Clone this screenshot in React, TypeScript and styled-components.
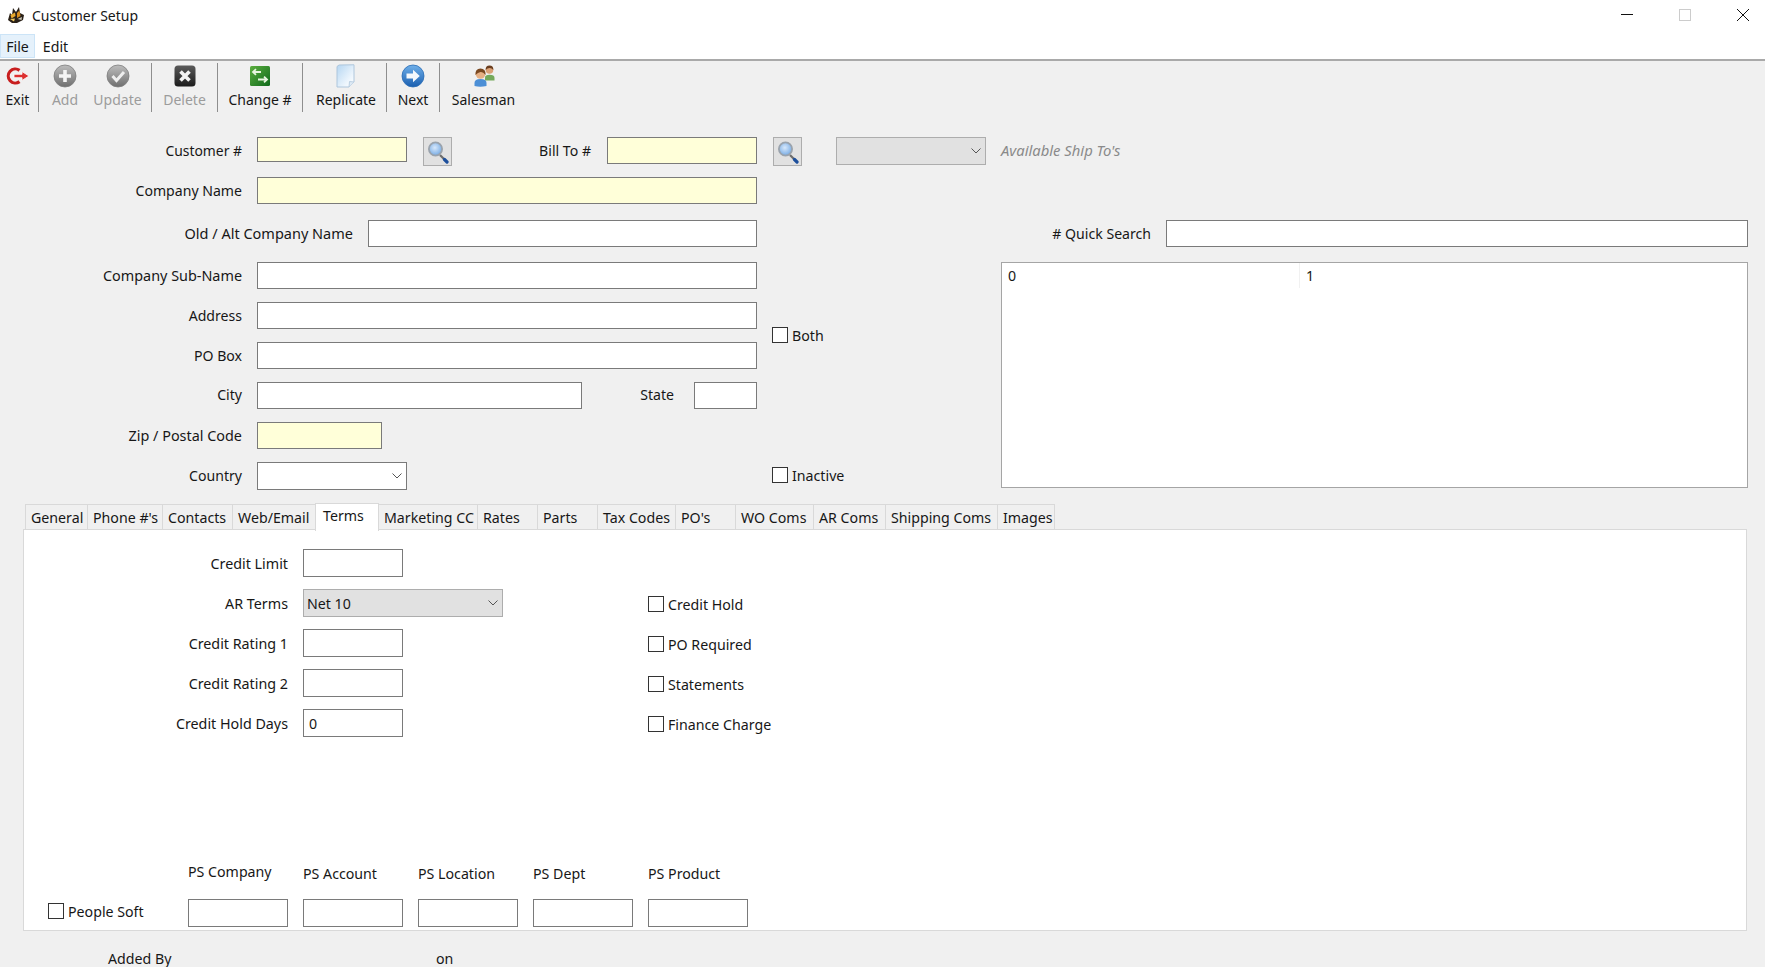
import React from "react";
import styled, { createGlobalStyle } from "styled-components";

const Global = createGlobalStyle`
  html, body { margin: 0; padding: 0; background: #f0f0f0; overflow: hidden; }
  * { box-sizing: border-box; }
  body { font-family: "Noto Sans", "Open Sans", "Liberation Sans", sans-serif; font-size: 14.2px; color: #171717; }
`;

const Page = styled.div`width: 1765px; height: 967px; overflow: hidden; background: #f0f0f0; display: flex; flex-direction: column;`;
const TitleBar = styled.div`height: 34px; background: #fff; display: flex; align-items: center; padding: 0 16px 4px 7px; flex: none;`;
const TitleText = styled.span`margin-left: 7px; flex: 1; font-size: 14px;`;
const WinControls = styled.div`display: flex; gap: 46px; align-items: center;`;
const MenuBar = styled.div`height: 27px; background: #fff; border-bottom: 2px solid #a9a9a9; display: flex; flex: none;`;
const MenuItem = styled.div<{ $on?: boolean; $w: number }>`
  width: ${p => p.$w}px; height: 24px; display: flex; align-items: center; justify-content: center;
  background: ${p => (p.$on ? "#e5f1fb" : "transparent")};
  border: 1px solid ${p => (p.$on ? "#cce4f7" : "transparent")};
`;
const Toolbar = styled.div`height: 54px; display: flex; align-items: flex-start; padding-top: 2px; flex: none;`;
const ToolButton = styled.div<{ $w: number; $off?: boolean; $mr?: number; $pl?: number }>`
  width: ${p => p.$w}px; height: 49px; display: flex; flex-direction: column; align-items: center; flex: none;
  margin-right: ${p => p.$mr ?? 0}px; padding-left: ${p => p.$pl ?? 0}px;
  color: ${p => (p.$off ? "#9c9c9c" : "#171717")}; padding-top: 1px; font-size: 14px;
  & > svg { flex: none; }
  & > span { line-height: 20px; margin-top: 2px; white-space: nowrap; }
`;
const ToolSep = styled.div`width: 1px; height: 49px; background: #8e8e8e; flex: none;`;

const TopForm = styled.div`padding-top: 22px; display: flex; flex-direction: column; flex: none;`;
const Row = styled.div<{ $mt?: number }>`display: flex; align-items: flex-start; margin-top: ${p => p.$mt ?? 0}px;`;
const Label = styled.label<{ $w: number; $gap?: number; $h?: number; $fs?: number }>`
  width: ${p => p.$w}px; flex: none; margin-right: ${p => p.$gap ?? 15}px; text-align: right; white-space: nowrap;
  font-size: ${p => p.$fs ?? 14.1}px;
  height: ${p => p.$h ?? 27}px; line-height: ${p => p.$h ?? 27}px;
`;
const Input = styled.input<{ $w?: number; $h?: number; $req?: boolean }>`
  display: block; width: ${p => (p.$w ? p.$w + "px" : "100%")}; height: ${p => p.$h ?? 27}px;
  margin: 0; padding: 0 5px; flex: ${p => (p.$w ? "none" : "1")}; min-width: 0;
  border: 1px solid #7a7a7a; border-radius: 0; outline: none;
  background: ${p => (p.$req ? "#ffffd9" : "#fff")}; font: inherit; color: inherit;
`;
const SearchBtn = styled.div<{ $ml: number; $w: number }>`
  width: ${p => p.$w}px; height: 29px; margin-left: ${p => p.$ml}px; flex: none;
  background: #e1e1e1; border: 1px solid #adadad; display: flex; align-items: center; justify-content: center;
`;
const Combo = styled.div<{ $w: number; $h?: number; $bg?: string; $ml?: number; $border?: string }>`
  width: ${p => p.$w}px; height: ${p => p.$h ?? 28}px; margin-left: ${p => p.$ml ?? 0}px; flex: none;
  background: ${p => p.$bg ?? "#fff"}; border: 1px solid ${p => p.$border ?? "#7a7a7a"};
  display: flex; align-items: center; justify-content: space-between; padding: 0 4px 0 3px;
`;
const ShipNote = styled.span`margin-left: 15px; height: 27px; line-height: 27px; font-size: 14.8px; font-style: italic; color: #8a8a8a; white-space: nowrap;`;
const Body = styled.div`display: flex; margin-top: 16px;`;
const LeftFields = styled.div`width: 757px; flex: none; display: flex; flex-direction: column;`;
const CheckCol = styled.div`width: 244px; flex: none; padding-left: 15px; display: flex; flex-direction: column;`;
const RightCol = styled.div`width: 747px; flex: none; display: flex; flex-direction: column;`;
const ListBox = styled.div`height: 226px; margin-top: 15px; border: 1px solid #a5a5a5; background: #fff; display: flex; align-items: flex-start;`;
const ListCell = styled.div<{ $w: number; $divider?: boolean }>`
  width: ${p => p.$w}px; height: 25px; line-height: 26px; padding-left: 6px;
  border-right: ${p => (p.$divider ? "1px solid #f1f1f1" : "none")};
`;
const Check = styled.label<{ $mt?: number }>`display: flex; align-items: center; height: 16px; gap: 4px; margin-top: ${p => p.$mt ?? 0}px; white-space: nowrap;`;
const Box = styled.span`width: 16px; height: 16px; flex: none; border: 1px solid #333; background: #fff;`;

const TabStrip = styled.div`display: flex; align-items: flex-end; margin: 13px 0 0 25px; height: 27px; flex: none; position: relative; z-index: 1;`;
const Tab = styled.div<{ $w: number; $on?: boolean }>`
  width: ${p => p.$w}px; flex: none; white-space: nowrap; padding-left: ${p => (p.$on ? 7 : 5)}px;
  height: ${p => (p.$on ? 28 : 26)}px; line-height: ${p => (p.$on ? 23 : 26)}px; margin-bottom: ${p => (p.$on ? -1 : 0)}px;
  border: 1px solid #d9d9d9; border-right-width: 0; border-bottom: ${p => (p.$on ? "none" : "1px solid #d9d9d9")};
  background: ${p => (p.$on ? "#fff" : "#f0f0f0")};
  &:last-child { border-right-width: 1px; }
  ${p => (p.$on ? "border-right-width: 1px; margin-right: -1px;" : "")}
`;
const Panel = styled.div`
  width: 1724px; height: 402px; margin-left: 23px; margin-top: -1px; background: #fff; border: 1px solid #d9d9d9; flex: none;
  display: flex; flex-direction: column; justify-content: space-between;
`;
const TermsGrid = styled.div`
  display: grid; grid-template-columns: 264px 200px auto; grid-auto-rows: 28px; column-gap: 15px; row-gap: 12px;
  padding-top: 19px; justify-content: start; align-items: center;
`;
const TermLabel = styled.label`text-align: right; white-space: nowrap; font-size: 14.3px;`;
const TermCheck = styled.div`padding-left: 130px; padding-top: 2px;`;
const PsGrid = styled.div`
  display: grid; grid-template-columns: repeat(5, 100px); column-gap: 15px; row-gap: 15px; padding: 0 0 3px 164px; position: relative;
  align-items: center;
`;
const PsLabel = styled.span<{ $up?: boolean }>`height: 20px; line-height: 20px; white-space: nowrap; margin-top: ${p => (p.$up ? -5 : 0)}px;`;
const PsCheck = styled.div`position: absolute; left: 24px; bottom: 11px;`;
const Footer = styled.div`display: flex; padding-left: 108px; margin-top: 18px; height: 20px; line-height: 20px; flex: none;`;
const FooterLabel = styled.span<{ $w: number }>`width: ${p => p.$w}px;`;

const Chevron = () => (
  <svg width="10" height="6" viewBox="0 0 10 6"><path d="M0.5 0.5 L5 5 L9.5 0.5" fill="none" stroke="#555" strokeWidth="1" /></svg>
);

const Magnifier = () => (
  <svg width="24" height="24" viewBox="0 0 24 24">
    <defs>
      <radialGradient id="mg" cx="45%" cy="40%" r="65%"><stop offset="0" stopColor="#d7e8fb" /><stop offset="1" stopColor="#6fa6e2" /></radialGradient>
    </defs>
    <path d="M14 15 L19 20" stroke="#6d6d6d" strokeWidth="2.2" />
    <path d="M18.5 19.5 L21 22" stroke="#1d4f9c" strokeWidth="3.2" strokeLinecap="round" />
    <circle cx="9.5" cy="9" r="6.6" fill="url(#mg)" stroke="#9aa3ad" strokeWidth="1.8" />
  </svg>
);

const AppIcon = () => (
  <svg width="18" height="18" viewBox="0 0 18 18">
    <path d="M1 14 L3 7 L5 9 L6 2 L9 6 L12 1 L13 7 L17 9 L16 14 L10 17 L5 17 Z" fill="#2a2118" />
    <path d="M3.5 9 L8 6.5 L8.5 10 L4.5 12.5 Z" fill="#e8a92e" />
    <path d="M10 7 L12.5 4.5 L13.5 10 L10 12 Z" fill="#d98f1f" />
    <path d="M3 13 L8 12.5 L7 15.5 Z" fill="#f0c860" />
    <path d="M10.5 13 L15 11 L14.5 14 Z" fill="#c9c4b4" />
  </svg>
);

const ExitIcon = () => (
  <svg width="24" height="24" viewBox="0 0 24 24">
    <path d="M13.5 6.4 A7 7 0 1 0 13.5 17.6" fill="none" stroke="#c81e1e" strokeWidth="3.2" />
    <path d="M8 10.3 H16 V7.6 L23 12 L16 16.4 V13.7 H8 Z" fill="#dc3030" stroke="#fff" strokeWidth="0.8" />
  </svg>
);

const GrayDisc = ({ id, children }: { id: string; children: React.ReactNode }) => (
  <svg width="24" height="24" viewBox="0 0 24 24">
    <defs>
      <linearGradient id={id} x1="0" y1="0" x2="0" y2="1"><stop offset="0" stopColor="#bdbdbd" /><stop offset="1" stopColor="#6f6f6f" /></linearGradient>
    </defs>
    <circle cx="12" cy="12" r="11" fill={`url(#${id})`} stroke="#7d7d7d" strokeWidth="0.8" />
    {children}
  </svg>
);

const DeleteIcon = () => (
  <svg width="24" height="24" viewBox="0 0 24 24">
    <defs>
      <linearGradient id="dl" x1="0" y1="0" x2="0" y2="1"><stop offset="0" stopColor="#5a5a5a" /><stop offset="1" stopColor="#1c1c1c" /></linearGradient>
    </defs>
    <rect x="1.5" y="1.5" width="21" height="21" rx="3.5" fill="url(#dl)" />
    <path d="M7.5 7.5 L16.5 16.5 M16.5 7.5 L7.5 16.5" stroke="#f2f2f2" strokeWidth="3.6" />
  </svg>
);

const ChangeIcon = () => (
  <svg width="24" height="24" viewBox="0 0 24 24">
    <defs>
      <linearGradient id="ch" x1="0" y1="0" x2="1" y2="1"><stop offset="0" stopColor="#5cae3f" /><stop offset="1" stopColor="#0f6a1c" /></linearGradient>
    </defs>
    <rect x="2" y="2" width="20" height="20" rx="1.5" fill="url(#ch)" />
    <path d="M13 8 H5.5 M8 5.2 L5 8 L8 10.8" fill="none" stroke="#e8f5e0" strokeWidth="1.8" />
    <path d="M10 15.5 H18.5 M16 12.7 L19 15.5 L16 18.3" fill="none" stroke="#e8f5e0" strokeWidth="1.8" />
  </svg>
);

const ReplicateIcon = () => (
  <svg width="24" height="24" viewBox="0 0 24 24">
    <defs>
      <linearGradient id="rp" x1="0" y1="0" x2="1" y2="1"><stop offset="0" stopColor="#b5d6f2" /><stop offset="0.7" stopColor="#eef6fd" /><stop offset="1" stopColor="#fff" /></linearGradient>
    </defs>
    <path d="M5 1 L20 0.8 V18 L15 23 H3 L3 2.5 Z" fill="url(#rp)" stroke="#aec6dc" strokeWidth="1" />
    <path d="M20 18 L15.5 17.5 L15 23" fill="#dfeaf4" stroke="#aec6dc" strokeWidth="0.8" />
  </svg>
);

const NextIcon = () => (
  <svg width="24" height="24" viewBox="0 0 24 24">
    <defs>
      <linearGradient id="nx" x1="0" y1="0" x2="0" y2="1"><stop offset="0" stopColor="#6fb0ea" /><stop offset="1" stopColor="#1a5fb0" /></linearGradient>
    </defs>
    <circle cx="12" cy="12" r="11" fill="url(#nx)" stroke="#2a6cb5" strokeWidth="0.8" />
    <path d="M5.5 9.5 H12 V5.8 L18.8 12 L12 18.2 V14.5 H5.5 Z" fill="#f4f8fc" />
  </svg>
);

const SalesmanIcon = () => (
  <svg width="24" height="24" viewBox="0 0 24 24">
    <path d="M13 13.5 Q13 10.8 17.5 10.8 Q22.5 10.8 22.5 14 V16.5 H13 Z" fill="#75a95a" />
    <circle cx="17.5" cy="6" r="3.8" fill="#dca277" />
    <path d="M13.6 6 Q13.6 1.6 17.5 1.6 Q21.4 1.6 21.4 6 Q19.4 3.8 17.5 4 Q15.4 4.2 13.6 6 Z" fill="#6a3d1e" />
    <path d="M2.5 22 V19 Q2.5 15 8.5 15 Q14.5 15 14.5 19 V22 Q8 23.5 2.5 22 Z" fill="#4c8fd6" />
    <circle cx="8.5" cy="10" r="4.8" fill="#e6b084" />
    <path d="M3.4 11 Q3 4.4 8.5 4.4 Q14 4.4 13.6 11 Q11 7.6 8.5 8 Q6 8.5 3.4 11 Z" fill="#7a4820" />
  </svg>
);

const WinMin = () => <svg width="12" height="12" viewBox="0 0 12 12"><path d="M0 5.5 H12" stroke="#111" strokeWidth="1" /></svg>;
const WinMax = () => <svg width="12" height="12" viewBox="0 0 12 12"><rect x="0.5" y="0.5" width="11" height="11" fill="none" stroke="#ccc" strokeWidth="1" /></svg>;
const WinClose = () => <svg width="12" height="12" viewBox="0 0 12 12"><path d="M0 0 L12 12 M12 0 L0 12" stroke="#111" strokeWidth="1" /></svg>;

const tabs: [string, number, boolean?][] = [
  ["General", 62], ["Phone #'s", 75], ["Contacts", 70], ["Web/Email", 83], ["Terms", 64, true], ["Marketing CC", 99],
  ["Rates", 60], ["Parts", 60], ["Tax Codes", 78], ["PO's", 60], ["WO Coms", 78], ["AR Coms", 72], ["Shipping Coms", 112], ["Images", 58],
];

const CheckItem = ({ label, mt }: { label: string; mt?: number }) => (
  <Check $mt={mt}><Box />{label}</Check>
);

export default function App() {
  return (
    <Page>
      <Global />
      <TitleBar>
        <AppIcon />
        <TitleText>Customer Setup</TitleText>
        <WinControls><WinMin /><WinMax /><WinClose /></WinControls>
      </TitleBar>
      <MenuBar>
        <MenuItem $on $w={35}>File</MenuItem>
        <MenuItem $w={41}>Edit</MenuItem>
      </MenuBar>
      <Toolbar>
        <ToolButton $w={35} $mr={3}><ExitIcon /><span>Exit</span></ToolButton><ToolSep />
        <ToolButton $w={52} $off><GrayDisc id="g1"><path d="M12 6 V18 M6 12 H18" stroke="#f4f4f4" strokeWidth="3.6" /></GrayDisc><span>Add</span></ToolButton>
        <ToolButton $w={53} $mr={7} $off><GrayDisc id="g2"><path d="M6.5 12 L10.5 16.5 L18 8" fill="none" stroke="#eee" strokeWidth="3" /></GrayDisc><span>Update</span></ToolButton><ToolSep />
        <ToolButton $w={65} $off><DeleteIcon /><span>Delete</span></ToolButton><ToolSep />
        <ToolButton $w={84}><ChangeIcon /><span>Change #</span></ToolButton><ToolSep />
        <ToolButton $w={83} $pl={3}><ReplicateIcon /><span>Replicate</span></ToolButton><ToolSep />
        <ToolButton $w={52}><NextIcon /><span>Next</span></ToolButton><ToolSep />
        <ToolButton $w={87}><SalesmanIcon /><span>Salesman</span></ToolButton>
      </Toolbar>

      <TopForm>
        <Row>
          <Label $w={242} $fs={13.9}>Customer #</Label>
          <Input $w={150} $h={25} $req />
          <SearchBtn $ml={16} $w={29}><Magnifier /></SearchBtn>
          <Label $w={139} $gap={16}>Bill To #</Label>
          <Input $w={150} $req />
          <SearchBtn $ml={16} $w={29}><Magnifier /></SearchBtn>
          <Combo $w={150} $ml={34} $bg="#e1e1e1" $border="#adadad"><span /><Chevron /></Combo>
          <ShipNote>Available Ship To's</ShipNote>
        </Row>
        <Row $mt={11}>
          <Label $w={242}>Company Name</Label>
          <Input $w={500} $req />
        </Row>
        <Body>
          <LeftFields>
            <Row>
              <Label $w={353} $fs={14.5}>Old / Alt Company Name</Label>
              <Input $w={389} />
            </Row>
            <Row $mt={15}>
              <Label $w={242} $fs={14.4}>Company Sub-Name</Label>
              <Input $w={500} />
            </Row>
            <Row $mt={13}>
              <Label $w={242}>Address</Label>
              <Input $w={500} />
            </Row>
            <Row $mt={13}>
              <Label $w={242}>PO Box</Label>
              <Input $w={500} />
            </Row>
            <Row $mt={13}>
              <Label $w={242} $h={26}>City</Label>
              <Input $w={325} />
              <Label $w={92} $gap={20} $h={25}>State</Label>
              <Input $w={63} />
            </Row>
            <Row $mt={13}>
              <Label $w={242} $fs={14.4}>Zip / Postal Code</Label>
              <Input $w={125} $req />
            </Row>
            <Row $mt={13}>
              <Label $w={242} $h={28}>Country</Label>
              <Combo $w={150}><span /><Chevron /></Combo>
            </Row>
          </LeftFields>
          <CheckCol>
            <CheckItem label="Both" mt={107} />
            <CheckItem label="Inactive" mt={124} />
          </CheckCol>
          <RightCol>
            <Row>
              <Label $w={150} $gap={15}># Quick Search</Label>
              <Input />
            </Row>
            <ListBox>
              <ListCell $w={298} $divider>0</ListCell>
              <ListCell $w={298}>1</ListCell>
            </ListBox>
          </RightCol>
        </Body>
      </TopForm>

      <TabStrip>
        {tabs.map(([t, w, on]) => <Tab key={t} $w={w} $on={on}>{t}</Tab>)}
      </TabStrip>
      <Panel>
        <TermsGrid>
          <TermLabel>Credit Limit</TermLabel><Input $w={100} $h={28} /><span />
          <TermLabel>AR Terms</TermLabel>
          <Combo $w={200} $bg="#e1e1e1" $border="#adadad"><span>Net 10</span><Chevron /></Combo>
          <TermCheck><CheckItem label="Credit Hold" /></TermCheck>
          <TermLabel>Credit Rating 1</TermLabel><Input $w={100} $h={28} />
          <TermCheck><CheckItem label="PO Required" /></TermCheck>
          <TermLabel>Credit Rating 2</TermLabel><Input $w={100} $h={28} />
          <TermCheck><CheckItem label="Statements" /></TermCheck>
          <TermLabel>Credit Hold Days</TermLabel><Input $w={100} $h={28} defaultValue="0" />
          <TermCheck><CheckItem label="Finance Charge" /></TermCheck>
        </TermsGrid>
        <PsGrid>
          <PsCheck><CheckItem label="People Soft" /></PsCheck>
          <PsLabel $up>PS Company</PsLabel>
          <PsLabel>PS Account</PsLabel>
          <PsLabel>PS Location</PsLabel>
          <PsLabel>PS Dept</PsLabel>
          <PsLabel>PS Product</PsLabel>
          <Input $w={100} $h={28} />
          <Input $w={100} $h={28} />
          <Input $w={100} $h={28} />
          <Input $w={100} $h={28} />
          <Input $w={100} $h={28} />
        </PsGrid>
      </Panel>
      <Footer>
        <FooterLabel $w={328}>Added By</FooterLabel>
        <FooterLabel $w={40}>on</FooterLabel>
      </Footer>
    </Page>
  );
}
